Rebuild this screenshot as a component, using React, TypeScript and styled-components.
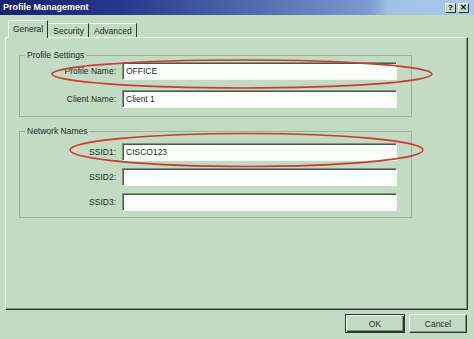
import * as React from "react";
import styled, { createGlobalStyle } from "styled-components";

const Colors = {
	Face: "#c3dbc2",
	Light: "#f3faf2",
	Shadow: "#80937f",
	DarkShadow: "#2b382b",
	Etch: "#9cb29b",
	Text: "#1d2a1d",
	Field: "#fbfdfb",
	Ring: "#cc3a35",
};

const GlobalStyle = createGlobalStyle`
	*, *::before, *::after {
		box-sizing: border-box;
	}
	html, body {
		margin: 0;
		padding: 0;
		background: ${Colors.Face};
	}
	body {
		font-family: "Liberation Sans", Arial, sans-serif;
		font-size: 8.5px;
		color: ${Colors.Text};
	}
`;

const Window = styled.div`
	position: relative;
	width: 474px;
	height: 339px;
	display: flex;
	flex-direction: column;
	background: ${Colors.Face};
	overflow: hidden;
`;

const TitleBar = styled.div`
	height: 15px;
	display: flex;
	align-items: center;
	padding: 0 5px 0 3px;
	background: linear-gradient(
		to right,
		#15236d 0%,
		#26378a 25%,
		#5a78b8 60%,
		#7c9bd0 78%,
		#9fc3e2 82%,
		#a9c9ee 100%
	);
`;

const Title = styled.span`
	flex: 1;
	color: #fff;
	font-weight: bold;
	font-size: 9px;
	line-height: 15px;
`;

const TitleButton = styled.div`
	width: 11px;
	height: 10px;
	margin-left: 2px;
	display: flex;
	align-items: center;
	justify-content: center;
	background: ${Colors.Face};
	border: 1px solid;
	border-color: ${Colors.Light} ${Colors.DarkShadow} ${Colors.DarkShadow} ${Colors.Light};
	color: #000;
	font-weight: bold;
	font-size: 8px;
	line-height: 8px;
`;

const TabRow = styled.div`
	height: 17px;
	margin-top: 5px;
	padding-left: 8px;
	display: flex;
	align-items: flex-end;
	position: relative;
	z-index: 1;
`;

const Tab = styled.div<{ $active?: boolean }>`
	height: ${(p) => (p.$active ? "18px" : "14px")};
	margin-bottom: ${(p) => (p.$active ? "-1px" : "0")};
	padding: 0 4px;
	display: flex;
	align-items: center;
	padding-bottom: ${(p) => (p.$active ? "2px" : "0")};
	background: ${Colors.Face};
	border-top: 1px solid ${Colors.Light};
	border-left: 1px solid ${(p) => (p.$active ? Colors.Light : "transparent")};
	border-right: 1px solid ${Colors.DarkShadow};
	white-space: nowrap;
`;

const Panel = styled.div`
	height: 273px;
	margin: 0 6px 0 5px;
	padding: 12px 0 0 13px;
	border-top: 1px solid ${Colors.Light};
	border-left: 1px solid ${Colors.Light};
	border-right: 1px solid ${Colors.DarkShadow};
	border-bottom: 1px solid ${Colors.DarkShadow};
	box-shadow: inset -1px -1px 0 ${Colors.Shadow};
`;

const Group = styled.fieldset<{ $padTop: number; $padBottom: number; $gap: number; $spaced?: boolean }>`
	width: 393px;
	margin: ${(p) => (p.$spaced ? "9px" : "0")} 0 0 0;
	padding: ${(p) => p.$padTop}px 0 ${(p) => p.$padBottom}px 0;
	border: 1px solid ${Colors.Etch};
	display: grid;
	grid-template-columns: 96px 275px;
	column-gap: 6px;
	row-gap: ${(p) => p.$gap}px;
	min-width: 0;
`;

const Legend = styled.legend`
	margin-left: 5px;
	padding: 0 2px;
	font-size: 8.5px;
	line-height: 10px;
`;

const FieldLabel = styled.label`
	align-self: center;
	text-align: right;
	white-space: nowrap;
`;

const Field = styled.input`
	height: 18px;
	width: 275px;
	margin: 0;
	padding: 0 3px;
	font-family: "Liberation Sans", Arial, sans-serif;
	font-size: 8.5px;
	color: ${Colors.Text};
	background: ${Colors.Field};
	border: 1px solid;
	border-color: ${Colors.Shadow} ${Colors.Light} ${Colors.Light} ${Colors.Shadow};
	box-shadow: inset 1px 1px 0 #4a584a;
	outline: none;
`;

const Footer = styled.div`
	display: flex;
	justify-content: flex-end;
	gap: 4px;
	padding: 4px 7px 0 0;
`;

const Button = styled.button<{ $default?: boolean }>`
	width: ${(p) => (p.$default ? "60px" : "58px")};
	height: 19px;
	padding: 0;
	font-family: "Liberation Sans", Arial, sans-serif;
	font-size: 8.5px;
	color: ${Colors.Text};
	background: ${Colors.Face};
	border: 1px solid;
	border-color: ${(p) =>
		p.$default
			? Colors.DarkShadow
			: `${Colors.Light} ${Colors.DarkShadow} ${Colors.DarkShadow} ${Colors.Light}`};
	box-shadow: ${(p) =>
		p.$default
			? `inset 1px 1px 0 ${Colors.Light}, inset -1px -1px 0 ${Colors.DarkShadow}, inset -2px -2px 0 ${Colors.Shadow}`
			: `inset -1px -1px 0 ${Colors.Shadow}`};
`;

const Marks = styled.svg`
	position: absolute;
	top: 0;
	left: 0;
	pointer-events: none;
`;

interface IRowProps {
	label: string;
	value?: string;
}

function Row({ label, value = "" }: IRowProps) {
	return (
		<>
			<FieldLabel>{label}</FieldLabel>
			<Field readOnly value={value} />
		</>
	);
}

export default function App() {
	return (
		<Window>
			<GlobalStyle />
			<TitleBar>
				<Title>Profile Management</Title>
				<TitleButton>?</TitleButton>
				<TitleButton>✕</TitleButton>
			</TitleBar>
			<TabRow>
				<Tab $active>General</Tab>
				<Tab>Security</Tab>
				<Tab>Advanced</Tab>
			</TabRow>
			<Panel>
				<Group $padTop={2} $padBottom={8} $gap={10}>
					<Legend>Profile Settings</Legend>
					<Row label="Profile Name:" value="OFFICE" />
					<Row label="Client Name:" value="Client 1" />
				</Group>
				<Group $padTop={7} $padBottom={6} $gap={7} $spaced>
					<Legend>Network Names</Legend>
					<Row label="SSID1:" value="CISCO123" />
					<Row label="SSID2:" />
					<Row label="SSID3:" />
				</Group>
			</Panel>
			<Footer>
				<Button $default>OK</Button>
				<Button>Cancel</Button>
			</Footer>
			<Marks width="474" height="339" viewBox="0 0 474 339">
				<ellipse cx="242" cy="74" rx="190" ry="14" fill="none" stroke={Colors.Ring} strokeWidth="1.6" />
				<ellipse cx="246.5" cy="150" rx="176.5" ry="16.5" fill="none" stroke={Colors.Ring} strokeWidth="1.6" />
			</Marks>
		</Window>
	);
}
